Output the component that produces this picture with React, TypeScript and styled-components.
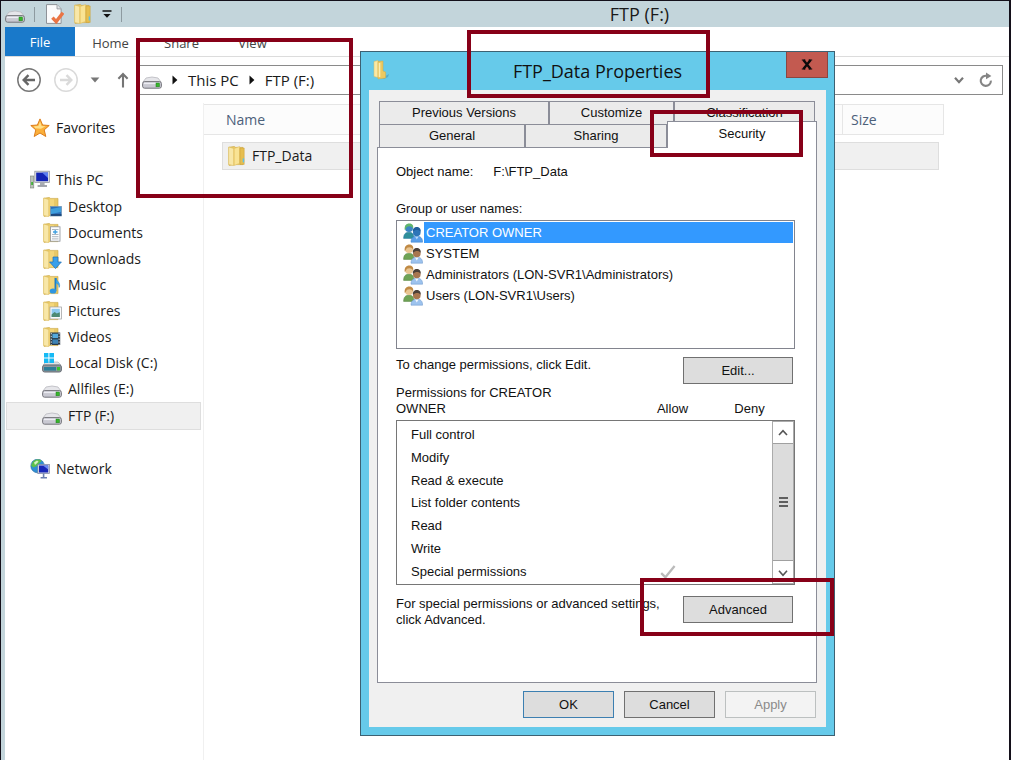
import React from 'react';
import styled, { createGlobalStyle, css } from 'styled-components';

const uiFont = "'Open Sans', 'Noto Sans', sans-serif";
const dialogFont = "'Liberation Sans', Arial, sans-serif";

const GlobalStyle = createGlobalStyle`
  * { box-sizing: border-box; }
  body { margin: 0; background: #fff; font-family: ${uiFont}; color: #1a1a1a; }
  button { font: inherit; color: inherit; border: 0; padding: 0; margin: 0; background: none; cursor: default; }
  ul { list-style: none; margin: 0; padding: 0; }
  h1, h2, p { margin: 0; font-weight: 400; }
  svg { display: block; flex: none; }
`;

/* ---------- Icons ---------- */

const DriveIcon = () => (
  <svg width="20" height="20" viewBox="0 0 20 20">
    <path d="M4 8 Q10 6 16 8 L19 12 H1 Z" fill="#e6e6ea" stroke="#b9b9bf" strokeWidth=".8" />
    <rect x=".6" y="11.6" width="18.8" height="6.6" rx="2" fill="#c9c9d2" stroke="#75757b" strokeWidth="1" />
    <path d="M2 13.4h16" stroke="#ededf3" strokeWidth="1.4" />
    <rect x="14" y="13" width="3.4" height="3.8" fill="#36b62b" stroke="#1e7d18" strokeWidth=".5" />
  </svg>
);

const SystemDriveIcon = () => (
  <svg width="20" height="20" viewBox="0 0 20 20">
    <path d="M1 12 L4 9 H16 L19 12Z" fill="#dfe3e6" stroke="#a4a9ae" strokeWidth=".6" />
    <rect x=".6" y="12" width="18.8" height="7" rx="2" fill="#8f979e" stroke="#666d74" />
    <rect x="2" y="14" width="12" height="3.6" fill="#2e7d97" />
    <rect x="15" y="14" width="3" height="3.4" fill="#39c32b" />
    <path d="M2 0h4.4v4.4H2zM7.4 0h4.6v4.4H7.4zM2 5.4h4.4V10H2zM7.4 5.4h4.6V10H7.4z" fill="#15baf5" />
  </svg>
);

const FolderShape = () => (
  <g>
    <path d="M2 1.2 L7.4 .4 L8.6 1.4 H16 V18.6 H7 L2 19.4Z" fill="#e8c866" stroke="#cba640" strokeWidth=".6" />
    <path d="M1.6 1 L6.8 2.4 V19.6 L1.6 18.6Z" fill="#f8e7a8" stroke="#dcbc5a" strokeWidth=".6" />
    <path d="M7.4 2.2h4.6v16H7.4z" fill="#f3d67a" />
  </g>
);

type FolderKind = 'plain' | 'desktop' | 'documents' | 'downloads' | 'music' | 'pictures' | 'videos';

const overlays: Record<FolderKind, React.ReactNode> = {
  plain: (
    <g>
      <path d="M7.2 2.4l5.4-1.8v16.8L7.2 19.4z" fill="#f9e394" stroke="#dcb752" strokeWidth=".5" />
      <path d="M13 2h4.2v16.4H13z" fill="#e6be50" stroke="#c99e36" strokeWidth=".5" />
      <path d="M16.4 12.4v4" stroke="#5fc1e6" strokeWidth="1.4" />
    </g>
  ),
  desktop: (
    <g>
      <rect x="8.5" y="9.5" width="11" height="9.5" fill="#2c6fb8" stroke="#6f95b5" strokeWidth=".7" />
      <path d="M9 12 L19 10 V15 L9 17Z" fill="#3f9fdd" />
      <path d="M9 18h10.4" stroke="#173a66" strokeWidth="1.4" />
    </g>
  ),
  documents: (
    <g>
      <rect x="8.5" y="3.8" width="9.5" height="14.4" fill="#fafcfe" stroke="#8d9299" strokeWidth=".8" />
      <path d="M10 6.5h6.5M10 11.5h6.5M10 13.7h6.5M10 15.9h6.5" stroke="#a5afba" strokeWidth=".9" />
      <path d="M11 9h4.5M13.2 7v4" stroke="#3f9fe0" strokeWidth="1.3" />
    </g>
  ),
  downloads: (
    <path d="M11 8h5v5h3.4l-5.9 6.6L7.6 13H11z" fill="#3aa0ea" stroke="#1d6fb6" strokeWidth=".7" />
  ),
  music: (
    <g>
      <path d="M13.5 3v13" stroke="#1d7fcd" strokeWidth="1.8" />
      <path d="M14 3c.5 3.4 5 4.4 3.2 9.4-.2-3-1.8-3.8-3.2-4.6z" fill="#41aef0" stroke="#1d7fcd" strokeWidth=".5" />
      <ellipse cx="11" cy="16" rx="3.3" ry="2.6" fill="#2f96e0" />
    </g>
  ),
  pictures: (
    <g>
      <rect x="8" y="6" width="11.4" height="12" fill="#fbfbfb" stroke="#9a9a9a" strokeWidth=".7" />
      <rect x="9.6" y="7.8" width="8.2" height="8.2" fill="#8cc9ef" />
      <path d="M9.6 13.5l3-2.5 2.2 1.6 3-1.3V16H9.6z" fill="#4d8a73" />
    </g>
  ),
  videos: (
    <g>
      <rect x="8.2" y="5.5" width="10" height="12.5" fill="#2a3a48" />
      <rect x="10.4" y="6.7" width="5.6" height="4.4" fill="#55a9dc" />
      <rect x="10.4" y="12.4" width="5.6" height="4.4" fill="#3d83b5" />
      <path d="M9.3 6v12M17.1 6v12" stroke="#cfd8df" strokeWidth="1" strokeDasharray="1.4 1.4" />
    </g>
  ),
};

const FolderIcon = ({ kind = 'plain' }: { kind?: FolderKind }) => (
  <svg width="20" height="20" viewBox="0 0 20 20">
    <FolderShape />
    {overlays[kind]}
  </svg>
);

const DialogFolderIcon = () => (
  <svg width="18" height="20" viewBox="0 0 18 20">
    <path d="M10 18l7-4-1 3-4 2z" fill="#3f8fae" opacity=".5" />
    <path d="M2 1.5l4-1v17l-4-1z" fill="#f9e9a6" stroke="#dcbd5c" strokeWidth=".5" />
    <path d="M6 1.5l5-.5v10l2.6 1v6L6 19z" fill="#ecc962" stroke="#d1aa43" strokeWidth=".5" />
    <path d="M7.5 3v14" stroke="#fbeeb4" strokeWidth="1.6" />
  </svg>
);

const StarIcon = () => (
  <svg width="20" height="20" viewBox="0 0 20 20">
    <path
      d="M10 .9l2.6 6.1 6.6.5-5 4.4 1.6 6.6L10 15l-5.8 3.5 1.6-6.6-5-4.4 6.6-.5z"
      fill="#fbb03a" stroke="#dc7d1d" strokeWidth="1" strokeLinejoin="round"
    />
    <path d="M10 3.4l1.6 4.5 4 .4-4.6 2.5-6-.6-1-1.9 4.4-.4z" fill="#ffe08a" />
  </svg>
);

const ComputerIcon = () => (
  <svg width="20" height="20" viewBox="0 0 20 20">
    <rect x=".6" y="6" width="3.2" height="12" fill="#b9c1b9" stroke="#7b827b" strokeWidth=".6" />
    <rect x="1.2" y="12" width="1.8" height="3" fill="#45b23a" />
    <rect x="4.8" y="1.2" width="14.6" height="11.4" fill="#d9dbe0" stroke="#8d9097" strokeWidth=".7" />
    <rect x="6.2" y="2.6" width="11.8" height="8.6" fill="#1424b4" />
    <path d="M12 2.6h6v5.4z" fill="#5d7ff0" />
    <path d="M10 12.6h4.6v3H10z" fill="#a9adb3" />
    <path d="M7.6 16h9.4" stroke="#9a9ea4" strokeWidth="1.8" />
  </svg>
);

const NetworkIcon = () => (
  <svg width="20" height="20" viewBox="0 0 20 20">
    <circle cx="7.6" cy="7" r="6.8" fill="#2f8fd4" stroke="#2266a0" strokeWidth=".6" />
    <path d="M3 2.4C6 0 10 .2 11.6 2L9 4.6 6.8 7 3.4 8.6 1 6.6Z" fill="#5cc04b" />
    <path d="M4 3.4l3-1.8 1.6 1.2L5 6z" fill="#d8f3c4" />
    <rect x="7.8" y="5.4" width="11.6" height="9.2" fill="#d5d9e4" stroke="#7780a0" strokeWidth=".7" />
    <rect x="9" y="6.5" width="9.2" height="7" fill="#1726b8" />
    <path d="M13 6.5h5.2v4z" fill="#6a8bf2" />
    <path d="M13.6 14.6v4M10.6 18.8h6.4" stroke="#6a7fae" strokeWidth="1.6" />
  </svg>
);

const PropertiesIcon = () => (
  <svg width="20" height="20" viewBox="-1 0 20 20">
    <path d="M1.5.6h10.6l4 4.2v14.6H1.5z" fill="#fbfbfc" stroke="#8e9298" />
    <path d="M12 .8v4.1h4" fill="#e3e5e8" stroke="#8e9298" strokeWidth=".8" />
    <path d="M7.4 13.6l3.8 4L18 8.8" fill="none" stroke="#ea7444" strokeWidth="3.4" />
  </svg>
);

const QuickMenuIcon = () => (
  <svg width="10" height="9" viewBox="0 0 10 9">
    <path d="M.5 1h9" stroke="#111" strokeWidth="1.5" />
    <path d="M1.4 4h7.2L5 7.8z" fill="#111" />
  </svg>
);

const CircleArrow = ({ color, ring, flip }: { color: string; ring: string; flip?: boolean }) => (
  <svg width="26" height="26" viewBox="0 0 26 26">
    <circle cx="13" cy="13" r="11.2" fill="#fff" stroke={ring} strokeWidth="1.5" />
    <path
      d={flip ? 'M7 13h11M13.5 8.2l4.8 4.8-4.8 4.8' : 'M19 13H8M12.5 8.2L7.7 13l4.8 4.8'}
      fill="none" stroke={color} strokeWidth="2.4"
    />
  </svg>
);

const CaretDown = () => (
  <svg width="10" height="6" viewBox="0 0 10 6"><path d="M.6.6h8.8L5 5.4z" fill="#777" /></svg>
);

const UpArrow = () => (
  <svg width="12" height="16" viewBox="0 0 12 16">
    <path d="M6 15.4V2.4M1.4 6.8L6 2l4.6 4.8" fill="none" stroke="#757575" strokeWidth="2.1" />
  </svg>
);

const CrumbArrow = () => (
  <svg width="6" height="10" viewBox="0 0 6 10"><path d="M.5.6v8.8L5.4 5z" fill="#111" /></svg>
);

const Chevron = ({ up, heavy }: { up?: boolean; heavy?: boolean }) => (
  <svg width="10" height="8" viewBox="0 0 10 8">
    <path d={up ? 'M1 6l4-4.4L9 6' : 'M1 1.8L5 6.2l4-4.4'} fill="none" stroke={heavy ? '#777' : '#555'} strokeWidth={heavy ? 2.2 : 1.6} />
  </svg>
);

const RefreshIcon = () => (
  <svg width="14" height="16" viewBox="0 0 14 16">
    <path d="M11.9 8.6A5.1 5.1 0 1 1 8.2 3.9" fill="none" stroke="#858585" strokeWidth="2.1" />
    <path d="M7 .4l5.4 3.6L7 7.2z" fill="#858585" />
  </svg>
);

const UsersIcon = ({ tinted }: { tinted?: boolean }) => (
  <svg width="20" height="20" viewBox="0 0 20 20">
    <path d="M.6 15.4c0-4.4 2-6.2 5.4-6.2s5 1.8 5 6.2z" fill={tinted ? '#2f8f9a' : '#6fa355'} stroke={tinted ? '#2374a2' : '#4f7f3b'} strokeWidth=".5" />
    <circle cx="6" cy="5" r="4" fill={tinted ? '#3c86c4' : '#e8c592'} />
    <path d="M1.8 7C1 2.6 3.4.4 6.2.4s4.6 1.8 4 5C8.6 3 6 2.6 4 3.8 3.2 4.8 3 6 1.8 7z" fill={tinted ? '#61b66c' : '#c08a45'} />
    <path d="M8 19.2c0-4.2 2-6 5.8-6s5.8 1.8 5.8 6z" fill={tinted ? '#5a9fe8' : '#9dc3ee'} stroke={tinted ? '#357cc8' : '#6792c8'} strokeWidth=".5" />
    <path d="M12 13.4l1.8 3 1.8-3z" fill={tinted ? '#b8d8f8' : '#f5f8fc'} />
    <circle cx="13.8" cy="9.4" r="3.8" fill={tinted ? '#2d75b8' : '#a8764f'} />
    <path d="M10 9c-.6-3.4 1.4-5 3.8-5s4.4 1.6 3.8 5c-1.4-2.4-5.2-2.6-7.6 0z" fill={tinted ? '#215f9c' : '#4b4038'} />
  </svg>
);

const CheckMark = () => (
  <svg width="16" height="14" viewBox="0 0 16 14">
    <path d="M1.2 8.2l4.2 4L14.6 1" fill="none" stroke="#bbb" strokeWidth="2.3" />
  </svg>
);

const CloseGlyph = () => (
  <svg width="12" height="11" viewBox="0 0 12 11">
    <path d="M2.4 1l7.2 9M9.6 1l-7.2 9" stroke="#0b0b0b" strokeWidth="2.4" />
    <path d="M.8 1h3.6M7.6 1h3.6M.8 10h3.6M7.6 10h3.6" stroke="#0b0b0b" strokeWidth="1.2" />
  </svg>
);

/* ---------- Explorer window ---------- */

const Desktop = styled.div`
  position: relative;
  min-height: 100vh;
  overflow: hidden;
  display: flex;
`;

const ExplorerWindow = styled.main`
  flex: 1;
  display: flex;
  flex-direction: column;
  border: solid #14101a;
  border-width: 1px 2px 0 1px;
`;

const TitleBar = styled.header`
  display: flex;
  align-items: center;
  height: 26px;
  padding-left: 4px;
  background: #c3d5db;
`;

const QuickAccess = styled.div`
  display: flex;
  align-items: center;
  gap: 9px;
`;

const Divider = styled.span`
  width: 1px;
  height: 15px;
  background: #8d9aa0;
`;

const WindowTitle = styled.h1`
  flex: 1;
  padding-left: 148px;
  text-align: center;
  font-size: 18px;
  line-height: 24px;
`;

const Frame = styled.div`
  flex: 1;
  display: flex;
  flex-direction: column;
  border-left: 4px solid #c3d5db;
`;

const Ribbon = styled.nav`
  display: flex;
  height: 30px;
  border-bottom: 1px solid #dcdcdc;
`;

const RibbonTab = styled.button<{ $file?: boolean }>`
  width: 71px;
  padding-top: 2px;
  font-size: 13px;
  line-height: 20px;
  color: #444;
  ${(p) => p.$file && css`
    width: 70px;
    padding: 0;
    background: #1979ca;
    color: #fff;
  `}
`;

const NavBar = styled.div`
  display: flex;
  align-items: center;
  height: 46px;
  padding: 0 6px 0 11px;
`;

const NavButtons = styled.div`
  display: flex;
  align-items: center;
  gap: 11px;
  margin-right: 8px;
`;

const HistoryButton = styled.button`
  padding-right: 6px;
`;

const AddressBar = styled.div`
  flex: 1;
  display: flex;
  align-items: center;
  height: 30px;
  padding: 0 9px 0 4px;
  border: 1px solid #8a8a8a;
  font-size: 15px;
  line-height: 20px;
`;

const Crumbs = styled.div`
  flex: 1;
  display: flex;
  align-items: center;
  gap: 10px;
`;

const AddressActions = styled.div`
  display: flex;
  align-items: center;
  gap: 15px;
`;

const Content = styled.div`
  flex: 1;
  display: flex;
`;

const Sidebar = styled.aside`
  width: 199px;
  padding: 12px 2px 0 1px;
  border-right: 1px solid #f0f0f0;
`;

const TreeGroup = styled.ul`
  margin-bottom: 26px;
`;

const TreeChildren = styled.ul`
  padding-top: 1px;
`;

const TreeItem = styled.button<{ $child?: boolean; $selected?: boolean }>`
  display: flex;
  align-items: center;
  gap: 6px;
  width: 100%;
  height: ${(p) => (p.$selected ? 28 : 26)}px;
  padding-left: ${(p) => (p.$child ? 35 : 23)}px;
  border: 1px solid ${(p) => (p.$selected ? '#dedede' : 'transparent')};
  background: ${(p) => (p.$selected ? '#f0f0f0' : 'transparent')};
  font-size: 14px;
  line-height: 20px;
  white-space: nowrap;
`;

const FileArea = styled.section`
  flex: 1;
  padding-top: 1px;
`;

const FileTable = styled.table`
  width: 740px;
  table-layout: fixed;
  border-collapse: separate;
  border-spacing: 0;
  font-size: 14px;
  line-height: 20px;
  text-align: left;
`;

const HeadCell = styled.th<{ $width?: number; $indent: number }>`
  width: ${(p) => (p.$width ? `${p.$width}px` : 'auto')};
  height: 31px;
  padding: 0 0 0 ${(p) => p.$indent}px;
  border: 1px solid #e6e6e6;
  border-left: 0;
  background: #fcfcfc;
  color: #4c607a;
  font-weight: 400;
`;

const FileCell = styled.td`
  padding: 7px 5px 0 18px;
`;

const FileRow = styled.div`
  display: flex;
  align-items: center;
  gap: 5px;
  height: 28px;
  padding-left: 4px;
  border: 1px solid #dedede;
  background: #f0f0f0;
`;

/* ---------- Properties dialog ---------- */

const Dialog = styled.section`
  position: absolute;
  left: 360px;
  top: 51px;
  width: 475px;
  display: flex;
  flex-direction: column;
  padding: 0 8px 8px;
  border: 1px solid #3d6172;
  background: #66caea;
  font-family: ${dialogFont};
  font-size: 13px;
  line-height: 16px;
  color: #111;
`;

const DialogTitleBar = styled.header`
  display: flex;
  height: 38px;
  padding-left: 3px;
  font-family: ${uiFont};
`;

const DialogIcon = styled.div`
  width: 37px;
  padding-top: 8px;
`;

const DialogTitle = styled.h2`
  flex: 1;
  text-align: center;
  font-size: 18px;
  line-height: 38px;
`;

const CloseButton = styled.button`
  display: flex;
  align-items: center;
  justify-content: center;
  width: 42px;
  height: 26px;
  margin-right: -2px;
  border: 1px solid #8a4642;
  border-top: 0;
  background: #c35a50;
`;

const DialogBody = styled.div`
  display: flex;
  flex-direction: column;
  padding: 11px 9px 9px 8px;
  background: #f0f0f0;
`;

const TabRow = styled.div`
  display: flex;
  padding: 0 2px 0 2px;
`;

const Tab = styled.button<{ $width: number; $active?: boolean }>`
  width: ${(p) => p.$width}px;
  height: 23px;
  border: 1px solid #8b8d98;
  border-bottom: 0;
  background: #ebebeb;
  ${(p) => p.$active && css`
    position: relative;
    height: 27px;
    margin: -3px -2px -1px 0;
    padding-bottom: 3px;
    background: #fff;
  `}
`;

const Panel = styled.div`
  height: 536px;
  padding: 16px 21px 0 18px;
  border: 1px solid #8b8d98;
  background: #fff;
`;

const ObjectLine = styled.p`
  display: flex;
  gap: 20px;
  margin-bottom: 21px;
`;

const UserList = styled.ul`
  height: 129px;
  margin-top: 3px;
  padding: 1px;
  border: 1px solid #82848e;
`;

const UserItem = styled.li`
  display: flex;
  align-items: center;
  height: 21px;
  padding-left: 5px;
  line-height: 21px;
`;

const UserName = styled.span<{ $selected?: boolean }>`
  flex: 1;
  padding-left: 2px;
  margin-left: 1px;
  background: ${(p) => (p.$selected ? '#3399ff' : 'transparent')};
  color: ${(p) => (p.$selected ? '#fff' : 'inherit')};
`;

const ActionLine = styled.div<{ $gap: number }>`
  display: flex;
  justify-content: space-between;
  margin-top: ${(p) => p.$gap}px;
  padding-right: 2px;
  white-space: pre-line;
`;

const PushButton = styled.button<{ $wide?: boolean; $primary?: boolean }>`
  width: ${(p) => (p.$wide ? 110 : 91)}px;
  height: 27px;
  border: 1px solid ${(p) => (p.$primary ? '#3c7fb1' : '#707070')};
  background: #ddd;
  &:disabled {
    border-color: #bcc0c0;
    background: #f3f3f3;
    color: #8a8a8a;
  }
`;

const PermissionHead = styled.div`
  display: flex;
  align-items: flex-end;
  margin: 1px 0 3px;
`;

const PermissionTitle = styled.p`
  width: 238px;
  padding-right: 60px;
`;

const ColumnLabel = styled.span`
  width: 77px;
  text-align: center;
`;

const PermissionBox = styled.div`
  display: flex;
  height: 165px;
  border: 1px solid #767676;
`;

const PermissionTable = styled.table`
  flex: 1;
  height: 159px;
  margin-top: 3px;
  table-layout: fixed;
  border-collapse: collapse;
  text-align: left;
  td, th { padding: 0; font-weight: 400; }
  th { width: 238px; padding-left: 14px; }
  td svg { margin-left: 25px; }
`;

const ScrollBar = styled.div`
  display: flex;
  flex-direction: column;
  width: 22px;
  border: 1px solid #ababab;
  background: #fff;
`;

const ScrollButton = styled.button`
  display: flex;
  align-items: center;
  justify-content: center;
  height: 21px;
`;

const Thumb = styled.div`
  flex: 1;
  display: flex;
  flex-direction: column;
  align-items: center;
  justify-content: center;
  gap: 2px;
  margin-bottom: 1px;
  border: solid #a0a0a0;
  border-width: 1px 0;
  background: #dcdcdc;
`;

const Grip = styled.span`
  width: 9px;
  height: 2px;
  background: #606060;
`;

const Footer = styled.footer`
  display: flex;
  justify-content: flex-end;
  gap: 10px;
  margin-top: 8px;
  padding-right: 1px;
`;

const Highlight = styled.div<{ $x: number; $y: number; $w: number; $h: number }>`
  position: absolute;
  left: ${(p) => p.$x}px;
  top: ${(p) => p.$y}px;
  width: ${(p) => p.$w}px;
  height: ${(p) => p.$h}px;
  border: 4px solid #870018;
  pointer-events: none;
`;

const folders: { name: string; icon: React.ReactNode; selected?: boolean }[] = [
  { name: 'Desktop', icon: <FolderIcon kind="desktop" /> },
  { name: 'Documents', icon: <FolderIcon kind="documents" /> },
  { name: 'Downloads', icon: <FolderIcon kind="downloads" /> },
  { name: 'Music', icon: <FolderIcon kind="music" /> },
  { name: 'Pictures', icon: <FolderIcon kind="pictures" /> },
  { name: 'Videos', icon: <FolderIcon kind="videos" /> },
  { name: 'Local Disk (C:)', icon: <SystemDriveIcon /> },
  { name: 'Allfiles (E:)', icon: <DriveIcon /> },
  { name: 'FTP (F:)', icon: <DriveIcon />, selected: true },
];

const users = ['CREATOR OWNER', 'SYSTEM', 'Administrators (LON-SVR1\\Administrators)', 'Users (LON-SVR1\\Users)'];

const permissions = [
  'Full control', 'Modify', 'Read & execute', 'List folder contents', 'Read', 'Write', 'Special permissions',
];

const PropertiesDialog = () => (
  <Dialog role="dialog" aria-labelledby="dialog-title">
    <DialogTitleBar>
      <DialogIcon><DialogFolderIcon /></DialogIcon>
      <DialogTitle id="dialog-title">FTP_Data Properties</DialogTitle>
      <CloseButton aria-label="Close"><CloseGlyph /></CloseButton>
    </DialogTitleBar>
    <DialogBody>
      <TabRow>
        <Tab $width={170}>Previous Versions</Tab>
        <Tab $width={125}>Customize</Tab>
        <Tab $width={141}>Classification</Tab>
      </TabRow>
      <TabRow>
        <Tab $width={146}>General</Tab>
        <Tab $width={142}>Sharing</Tab>
        <Tab $width={150} $active>Security</Tab>
      </TabRow>
      <Panel>
        <ObjectLine><span>Object name:</span><span>F:\FTP_Data</span></ObjectLine>
        <p id="users-label">Group or user names:</p>
        <UserList role="listbox" aria-labelledby="users-label">
          {users.map((name, i) => (
            <UserItem key={name} role="option" aria-selected={i === 0}>
              <UsersIcon tinted={i === 0} />
              <UserName $selected={i === 0}>{name}</UserName>
            </UserItem>
          ))}
        </UserList>
        <ActionLine $gap={8}>
          <p>To change permissions, click Edit.</p>
          <PushButton $wide>Edit...</PushButton>
        </ActionLine>
        <PermissionHead>
          <PermissionTitle>Permissions for CREATOR OWNER</PermissionTitle>
          <ColumnLabel>Allow</ColumnLabel>
          <ColumnLabel>Deny</ColumnLabel>
        </PermissionHead>
        <PermissionBox>
          <PermissionTable aria-label="Permissions">
            <tbody>
              {permissions.map((name, i) => (
                <tr key={name}>
                  <th scope="row">{name}</th>
                  <td>{i === 6 && <CheckMark />}</td>
                  <td />
                </tr>
              ))}
            </tbody>
          </PermissionTable>
          <ScrollBar>
            <ScrollButton aria-label="Scroll up"><Chevron up /></ScrollButton>
            <Thumb><Grip /><Grip /><Grip /></Thumb>
            <ScrollButton aria-label="Scroll down"><Chevron /></ScrollButton>
          </ScrollBar>
        </PermissionBox>
        <ActionLine $gap={11}>
          <p>{'For special permissions or advanced settings,\nclick Advanced.'}</p>
          <PushButton $wide>Advanced</PushButton>
        </ActionLine>
      </Panel>
      <Footer>
        <PushButton $primary>OK</PushButton>
        <PushButton>Cancel</PushButton>
        <PushButton disabled>Apply</PushButton>
      </Footer>
    </DialogBody>
  </Dialog>
);

export default function App() {
  return (
    <Desktop>
      <GlobalStyle />
      <ExplorerWindow>
        <TitleBar>
          <QuickAccess>
            <DriveIcon />
            <Divider />
            <PropertiesIcon />
            <FolderIcon />
            <QuickMenuIcon />
            <Divider />
          </QuickAccess>
          <WindowTitle>FTP (F:)</WindowTitle>
        </TitleBar>
        <Frame>
          <Ribbon>
            <RibbonTab $file>File</RibbonTab>
            <RibbonTab>Home</RibbonTab>
            <RibbonTab>Share</RibbonTab>
            <RibbonTab>View</RibbonTab>
          </Ribbon>
          <NavBar>
            <NavButtons>
              <button aria-label="Back"><CircleArrow color="#666" ring="#777" /></button>
              <button aria-label="Forward"><CircleArrow color="#dadada" ring="#dadada" flip /></button>
              <HistoryButton aria-label="Recent locations"><CaretDown /></HistoryButton>
              <button aria-label="Up"><UpArrow /></button>
            </NavButtons>
            <AddressBar>
              <Crumbs>
                <DriveIcon />
                <CrumbArrow />
                <button>This PC</button>
                <CrumbArrow />
                <button>FTP (F:)</button>
              </Crumbs>
              <AddressActions>
                <button aria-label="Previous locations"><Chevron heavy /></button>
                <button aria-label="Refresh"><RefreshIcon /></button>
              </AddressActions>
            </AddressBar>
          </NavBar>
          <Content>
            <Sidebar>
              <TreeGroup>
                <li><TreeItem><StarIcon />Favorites</TreeItem></li>
              </TreeGroup>
              <TreeGroup>
                <li>
                  <TreeItem><ComputerIcon />This PC</TreeItem>
                  <TreeChildren>
                    {folders.map((f) => (
                      <li key={f.name}>
                        <TreeItem $child $selected={f.selected}>{f.icon}{f.name}</TreeItem>
                      </li>
                    ))}
                  </TreeChildren>
                </li>
              </TreeGroup>
              <TreeGroup>
                <li><TreeItem><NetworkIcon />Network</TreeItem></li>
              </TreeGroup>
            </Sidebar>
            <FileArea>
              <FileTable>
                <thead>
                  <tr>
                    <HeadCell $indent={22}>Name</HeadCell>
                    <HeadCell $indent={8} $width={101}>Size</HeadCell>
                  </tr>
                </thead>
                <tbody>
                  <tr>
                    <FileCell colSpan={2}>
                      <FileRow><FolderIcon />FTP_Data</FileRow>
                    </FileCell>
                  </tr>
                </tbody>
              </FileTable>
            </FileArea>
          </Content>
        </Frame>
      </ExplorerWindow>
      <PropertiesDialog />
      <Highlight $x={136} $y={38} $w={217} $h={160} />
      <Highlight $x={467} $y={30} $w={243} $h={68} />
      <Highlight $x={650} $y={110} $w={153} $h={47} />
      <Highlight $x={640} $y={578} $w={194} $h={58} />
    </Desktop>
  );
}
